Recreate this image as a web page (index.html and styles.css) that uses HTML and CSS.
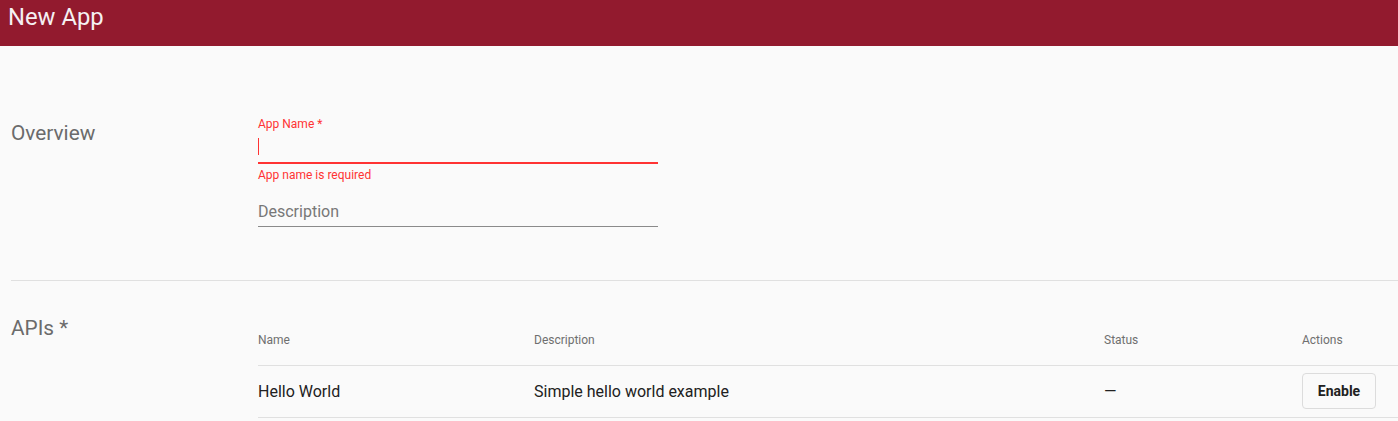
FILE: index.html
```html
<!DOCTYPE html>
<html lang="en">
<head>
<meta charset="utf-8">
<title>New App</title>
<link rel="stylesheet" href="styles.css">
</head>
<body>
<header class="toolbar">New App</header>
<main class="content">
  <section class="section section-overview">
    <h2 class="section-title">Overview</h2>
    <div class="section-body">
      <div class="field field-invalid">
        <label class="field-label">App Name *</label>
        <div class="field-input"><span class="caret"></span></div>
        <div class="field-error">App name is required</div>
      </div>
      <div class="field field-plain">
        <div class="field-placeholder">Description</div>
      </div>
    </div>
  </section>
  <section class="section section-apis">
    <h2 class="section-title title-apis">APIs *</h2>
    <div class="section-body">
      <div class="table">
        <div class="row head">
          <div class="cell">Name</div>
          <div class="cell">Description</div>
          <div class="cell">Status</div>
          <div class="cell">Actions</div>
        </div>
        <div class="row body-row">
          <div class="cell">Hello World</div>
          <div class="cell">Simple hello world example</div>
          <div class="cell">—</div>
          <div class="cell"><button class="btn">Enable</button></div>
        </div>
      </div>
    </div>
  </section>
</main>
</body>
</html>
```
FILE: styles.css
```css
html, body {
  margin: 0;
  padding: 0;
  background: #fafafa;
  font-family: Roboto, "Noto Sans", sans-serif;
  overflow: hidden;
}
.toolbar {
  height: 46px;
  background: #921a2e;
  color: #f5f0f2;
  font-size: 23.8px;
  line-height: 34px;
  padding-left: 8px;
  box-sizing: border-box;
}
.content {
  padding-left: 11px;
}
.section {
  display: flex;
}
.section-overview {
  padding-top: 70px;
  padding-bottom: 53px;
  border-bottom: 1px solid #e0e0e0;
}
.section-title {
  width: 247px;
  flex: none;
  margin: 0;
  font-size: 20.8px;
  line-height: 24px;
  font-weight: 400;
  color: #6b6b6b;
  padding-top: 5px;
}
.section-body {
  flex: 1;
  min-width: 0;
}
.field {
  width: 400px;
}
.field-label {
  display: block;
  font-size: 12px;
  line-height: 16px;
  color: #ff3333;
}
.field-input {
  border-bottom: 2px solid #ff3333;
  box-sizing: border-box;
  padding-top: 6px;
  height: 32px;
}
.caret {
  display: block;
  width: 1px;
  height: 17px;
  background: #ff3333;
}
.field-error {
  margin-top: 3px;
  font-size: 12px;
  line-height: 16px;
  color: #ff3333;
}
.field-plain {
  margin-top: 19px;
  border-bottom: 1px solid #8a8a8a;
  padding-bottom: 4px;
}
.field-placeholder {
  font-size: 16px;
  line-height: 20px;
  color: #777;
}
.section-apis {
  padding-top: 28px;
}
.title-apis {
  padding-top: 7px;
}
.table {
  display: flex;
  flex-direction: column;
}
.row {
  display: grid;
  grid-template-columns: 276px 570px 198px 1fr;
  align-items: center;
  border-bottom: 1px solid #e0e0e0;
}
.row.head {
  height: 57px;
  font-size: 12px;
  color: #6f6f6f;
  padding-top: 6px;
  box-sizing: border-box;
}
.row.body-row {
  height: 52px;
  font-size: 16px;
  color: #212121;
  padding-bottom: 1px;
  box-sizing: border-box;
}
.btn {
  font-family: Roboto, "Noto Sans", sans-serif;
  font-size: 14px;
  font-weight: 700;
  color: #212121;
  background: #fafafa;
  border: 1px solid #dcdcdc;
  border-radius: 4px;
  width: 74px;
  height: 36px;
  padding: 0;
}
```
